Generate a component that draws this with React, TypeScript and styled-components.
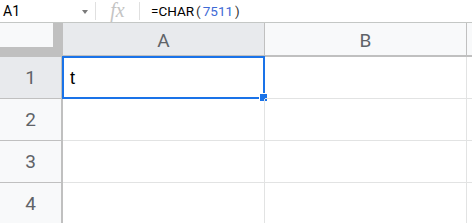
import styled, { createGlobalStyle } from 'styled-components'

const GlobalStyle = createGlobalStyle`
  html, body {
    margin: 0;
    padding: 0;
    background: #fff;
    overflow: hidden;
  }
  body {
    font-family: Roboto, "Liberation Sans", Arial, sans-serif;
  }
`

const Page = styled.div`
  width: 472px;
  height: 223px;
  overflow: hidden;
  background: #fff;
`

const FormulaBar = styled.div`
  height: 22px;
  display: flex;
  align-items: center;
  border-bottom: 1px solid #c4c7c5;
`

const NameBox = styled.div`
  width: 95px;
  height: 22px;
  display: flex;
  align-items: center;
  justify-content: space-between;
  padding-left: 3px;
  padding-right: 7px;
  box-sizing: border-box;
  font-size: 14px;
  color: #000;
`

const Caret = styled.span`
  width: 0;
  height: 0;
  border-left: 3.5px solid transparent;
  border-right: 3.5px solid transparent;
  border-top: 4px solid #7a7a7a;
  margin-top: 2px;
`

const Divider = styled.div`
  width: 1px;
  height: 18px;
  background: #e0e0e0;
`

const FxLabel = styled.div`
  width: 43px;
  height: 22px;
  display: flex;
  align-items: center;
  justify-content: center;
  font-family: "Liberation Serif", "DejaVu Serif", serif;
  font-style: italic;
  font-size: 20px;
  color: #c4c4c4;
  line-height: 1;
  padding-bottom: 2px;
  box-sizing: border-box;
`

const FormulaText = styled.div`
  padding-left: 11px;
  font-size: 13.5px;
  color: #000;
`

const Arg = styled.span`
  color: #3d6ad6;
`

const Paren = styled.span`
  color: #333;
  margin: 0 2px;
`

const Grid = styled.div`
  display: grid;
  grid-template-columns: 63px 202px 202px 1fr;
  grid-template-rows: 34px repeat(4, 42px);
`

const Corner = styled.div`
  background: #c0c0c0;
  border-bottom: 1px solid #c0c0c0;
`

const CornerInner = styled.div`
  width: 53px;
  height: 24px;
  background: #f8f9fa;
`

const ColHeader = styled.div<{ $active?: boolean }>`
  background: ${(p) => (p.$active ? '#e8eaed' : '#f8f9fa')};
  border-right: 1px solid #c0c0c0;
  border-bottom: 2px solid #c0c0c0;
  display: flex;
  align-items: center;
  justify-content: center;
  font-size: 19px;
  color: #5f6368;
  padding-top: 2px;
`

const RowHeader = styled.div<{ $active?: boolean }>`
  background: ${(p) => (p.$active ? '#e8eaed' : '#f8f9fa')};
  border-right: 2px solid #c0c0c0;
  border-bottom: 1px solid #c0c0c0;
  display: flex;
  align-items: center;
  justify-content: center;
  font-size: 19px;
  color: #5f6368;
`

const Cell = styled.div`
  position: relative;
  border-right: 1px solid #e2e3e3;
  border-bottom: 1px solid #e2e3e3;
  display: flex;
  align-items: center;
  padding-left: 7px;
  font-family: "Liberation Sans", Arial, sans-serif;
  font-size: 18px;
  color: #000;
`

const CellText = styled.span`
  padding-top: 1px;
`

const Selection = styled.div`
  position: absolute;
  left: -1px;
  top: -1px;
  right: -1px;
  bottom: -1px;
  border: 2px solid #1a73e8;
  pointer-events: none;
`

const Handle = styled.div`
  position: absolute;
  right: -5px;
  bottom: -5px;
  width: 7px;
  height: 7px;
  background: #1a73e8;
  border: 1px solid #fff;
`

const rows = [1, 2, 3, 4]

export default function App() {
  return (
    <Page>
      <GlobalStyle />
      <FormulaBar>
        <NameBox>
          <span>A1</span>
          <Caret />
        </NameBox>
        <Divider />
        <FxLabel>fx</FxLabel>
        <Divider />
        <FormulaText>
          =CHAR<Paren>(</Paren>
          <Arg>7511</Arg>
          <Paren>)</Paren>
        </FormulaText>
      </FormulaBar>
      <Grid>
        <Corner>
          <CornerInner />
        </Corner>
        <ColHeader $active>A</ColHeader>
        <ColHeader>B</ColHeader>
        <ColHeader />
        {rows.map((r) => (
          <>
            <RowHeader key={`h${r}`} $active={r === 1}>
              {r}
            </RowHeader>
            <Cell key={`a${r}`}>
              {r === 1 && (
                <>
                  <CellText>t</CellText>
                  <Selection>
                    <Handle />
                  </Selection>
                </>
              )}
            </Cell>
            <Cell key={`b${r}`} />
            <Cell key={`c${r}`} />
          </>
        ))}
      </Grid>
    </Page>
  )
}
